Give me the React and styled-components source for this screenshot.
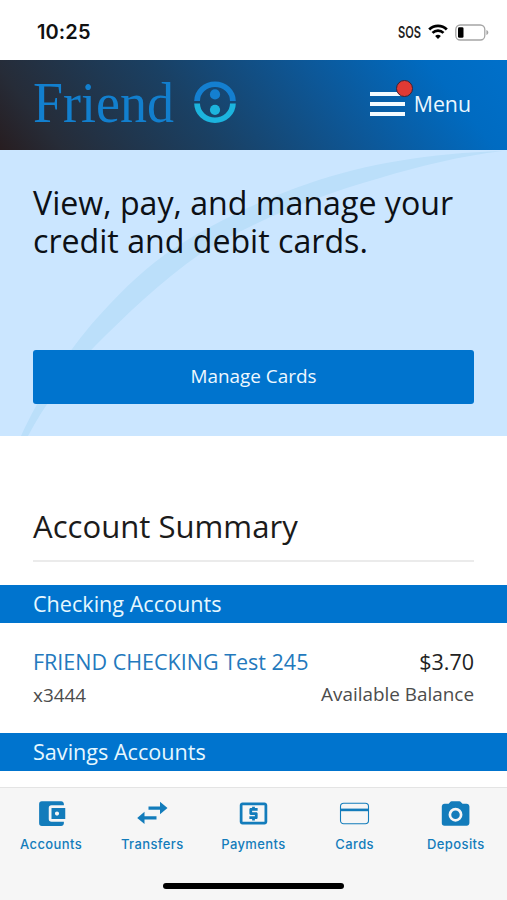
import React from "react";
import styled, { createGlobalStyle } from "styled-components";
import { MdAccountBalanceWallet, MdLocalAtm } from "react-icons/md";

const GlobalStyle = createGlobalStyle`
  * {
    box-sizing: border-box;
  }
  body {
    margin: 0;
    background: #fff;
    font-family: "Open Sans", sans-serif;
  }
  h1, h2, h3, p {
    margin: 0;
    font-weight: 400;
  }
  button {
    border: 0;
    padding: 0;
    background: none;
    font-family: inherit;
  }
  svg {
    display: block;
  }
`;

const Screen = styled.div`
  display: flex;
  flex-direction: column;
  width: 507px;
  height: 900px;
  overflow: hidden;
  background: #fff;
`;

const StatusBar = styled.div`
  display: flex;
  flex: none;
  align-items: center;
  justify-content: space-between;
  height: 60px;
  padding: 4px 18px 0 37px;
`;

const Clock = styled.span`
  font-family: Inter, sans-serif;
  font-size: 20px;
  font-weight: 600;
  letter-spacing: 0.1px;
  color: #111;
`;

const StatusIcons = styled.div`
  display: flex;
  align-items: center;
`;

const Sos = styled.svg`
  margin-right: 6px;
  overflow: visible;
  font-family: Inter, sans-serif;
  font-size: 15.5px;
  font-weight: 600;
`;

const Battery = styled.svg`
  margin-left: 7px;
`;

const Header = styled.header`
  display: flex;
  flex: none;
  align-items: center;
  justify-content: space-between;
  height: 90px;
  padding: 0 36px 0 33px;
  background: linear-gradient(52deg, #271d20 0%, #262c38 11%, #1a4063 38%, #0d5797 64%, #006bc1 86%, #0070ca 100%);
`;

const Brand = styled.svg`
  overflow: visible;
  font-family: "Liberation Serif", serif;
  font-size: 58px;
`;

const MenuButton = styled.button`
  display: flex;
  align-items: center;
  gap: 9px;
  padding-bottom: 3px;
  font-size: 21.3px;
  line-height: 30px;
  color: #eaf7ff;
`;

const Bars = styled.span`
  position: relative;
  display: flex;
  flex-direction: column;
  gap: 6px;
  width: 35px;
`;

const Bar = styled.span`
  height: 4px;
  background: #f4fbff;
`;

const Badge = styled.span`
  position: absolute;
  top: -12px;
  right: -8px;
  width: 17px;
  height: 17px;
  border: 1px solid #3c2436;
  border-radius: 50%;
  background: #e03a34;
`;

const Hero = styled.section`
  position: relative;
  flex: none;
  height: 286px;
  padding: 34px 33px 0;
  background: #cbe6ff;
`;

const Swoosh = styled.svg`
  position: absolute;
  top: 0;
  left: 0;
`;

const HeroTitle = styled.h1`
  position: relative;
  height: 166px;
  font-size: 32.15px;
  line-height: 37.5px;
  color: #0c1016;
  white-space: nowrap;
`;

const ManageButton = styled.button`
  position: relative;
  width: 100%;
  height: 54px;
  padding-bottom: 2px;
  border-radius: 3px;
  background: #0074ce;
  font-size: 18.9px;
  color: #eef8ff;
`;

const Summary = styled.main`
  flex: 1;
  min-height: 0;
  overflow: hidden;
  padding-top: 67px;
`;

const SummaryTitle = styled.h2`
  height: 59px;
  margin: 0 33px 23px;
  border-bottom: 2px solid #ebebeb;
  font-size: 31.1px;
  line-height: 46px;
  color: #1b1b1b;
`;

const GroupTitle = styled.h3`
  height: 38px;
  padding-left: 33px;
  background: #0074ce;
  font-size: 21.6px;
  line-height: 38px;
  color: #e6f8ff;
`;

const AccountRow = styled.div`
  display: flex;
  justify-content: space-between;
  height: 110px;
  padding: 23px 33px 0;
`;

const Column = styled.div`
  text-align: ${(props) => props.$align || "left"};
`;

const AccountName = styled.p`
  font-size: 21.5px;
  line-height: 32px;
  color: #2379bd;
`;

const Amount = styled.p`
  font-size: 21.5px;
  line-height: 32px;
  color: #222;
`;

const Detail = styled.p`
  padding-top: ${(props) => props.$top || 0}px;
  font-size: 18.9px;
  line-height: 32px;
  color: #4c4c4c;
`;

const TabBar = styled.nav`
  display: flex;
  flex: none;
  flex-direction: column;
  align-items: center;
  height: 113px;
  border-top: 1px solid #e4e4e4;
  background: #f6f6f6;
`;

const Tabs = styled.div`
  display: grid;
  grid-template-columns: repeat(5, 101.2px);
  width: 506px;
  height: 95px;
`;

const Tab = styled.button`
  display: flex;
  flex-direction: column;
  align-items: center;
  padding-top: 9px;
  color: #137cbb;
`;

const TabLabel = styled.span`
  margin-top: 5px;
  font-family: Inter, sans-serif;
  font-size: 13px;
  font-weight: 500;
  line-height: 18px;
  letter-spacing: 0.4px;
`;

const HomeIndicator = styled.div`
  width: 181px;
  height: 6px;
  border-radius: 3px;
  background: #000;
`;

const WifiIcon = () => (
  <svg width="20" height="16" viewBox="0 0 20 16" fill="none" stroke="#000">
    <path d="M1.2 5.4a12.6 12.6 0 0 1 17.6 0" strokeWidth="2.8" />
    <path d="M4.5 8.9a7.9 7.9 0 0 1 11 0" strokeWidth="2.7" />
    <path d="M10 15l-2.9-2.9a4.1 4.1 0 0 1 5.8 0z" fill="#000" stroke="none" />
  </svg>
);

const BatteryIcon = () => (
  <Battery width="34" height="17" viewBox="0 0 34 17">
    <rect x="0.8" y="1" width="29" height="15" rx="4.5" fill="none" stroke="#a5a5a5" strokeWidth="1.3" />
    <rect x="3" y="3.3" width="5.5" height="10.4" rx="1.3" fill="#000" />
    <path d="M31.4 6v5c1.3-.4 1.9-1.3 1.9-2.5S32.7 6.4 31.4 6z" fill="#a5a5a5" />
  </Battery>
);

const Logo = () => (
  <Brand width="206" height="60" viewBox="0 0 206 60">
    <text x="0" y="47" textLength="141" lengthAdjust="spacingAndGlyphs" fill="#127fce">
      Friend
    </text>
    <path d="M161.2 26a20.8 19.6 0 0 1 41.6 0h-5.8a15 14 0 0 0-30 0z" fill="#147fd0" />
    <path d="M161.2 28.6a20.8 19.4 0 0 0 41.6 0H197a15 14 0 0 1-30 0z" fill="#1cb4de" />
    <circle cx="182" cy="19.4" r="5.1" fill="#147fd0" />
    <circle cx="182" cy="34.8" r="5.1" fill="#1cb4de" />
  </Brand>
);

const TransferIcon = () => (
  <svg width="33" height="33" viewBox="0 0 33 33" fill="currentColor">
    <path d="M12.5 9.5H24V4.8l7.5 6.3-7.5 6.2v-4.6H12.5z" />
    <path d="M20.5 19.3h-12v-4.6l-7.3 6.2 7.3 6.2v-4.6h12z" />
  </svg>
);

const CardIcon = () => (
  <svg width="33" height="33" viewBox="0 0 33 33" fill="none" stroke="currentColor">
    <rect x="2.5" y="6.2" width="28" height="20.5" rx="3.2" strokeWidth="1.1" />
    <path d="M2.5 12.9h28" strokeWidth="2.6" />
  </svg>
);

const CameraIcon = () => (
  <svg width="33" height="33" viewBox="0 0 33 33">
    <path
      d="M12.6 4.300h7.800c.5 0 .9.200 1.200.5l1.900 1.900h4.200c1.500 0 2.700 1.200 2.700 2.700v16.700c0 1.500-1.200 2.700-2.700 2.700H5.500a2.700 2.700 0 0 1-2.700-2.700V9.400c0-1.500 1.200-2.700 2.700-2.700h4.200l1.700-1.900c.3-.3.7-.5 1.200-.5z"
      fill="currentColor"
    />
    <circle cx="16.5" cy="17.7" r="5.6" fill="none" stroke="#f6f6f6" strokeWidth="2.7" />
  </svg>
);

const tabs = [
  { label: "Accounts", icon: <MdAccountBalanceWallet size={33} /> },
  { label: "Transfers", icon: <TransferIcon /> },
  { label: "Payments", icon: <MdLocalAtm size={33} /> },
  { label: "Cards", icon: <CardIcon /> },
  { label: "Deposits", icon: <CameraIcon /> },
];

const App = () => {
  return (
    <Screen>
      <GlobalStyle />
      <StatusBar>
        <Clock>10:25</Clock>
        <StatusIcons>
          <Sos width="24" height="20" viewBox="0 0 24 20">
            <text x="0" y="15.5" textLength="23" lengthAdjust="spacingAndGlyphs" fill="#222">
              SOS
            </text>
          </Sos>
          <WifiIcon />
          <BatteryIcon />
        </StatusIcons>
      </StatusBar>
      <Header>
        <Logo />
        <MenuButton>
          <Bars>
            <Bar />
            <Bar />
            <Bar />
            <Badge />
          </Bars>
          Menu
        </MenuButton>
      </Header>
      <Hero>
        <Swoosh width="507" height="286" viewBox="0 0 507 286">
          <path
            d="M503 1C430 3 365 14 310 33C258 51 210 74 167 103C137 125 117 146 98 167C68 200 40 245 21 286H28C45 254 65 227 95 196C125 166 160 132 200 104C250 73 315 46 380 28C420 16 460 6 503 1z"
            fill="#bbdffa"
          />
        </Swoosh>
        <HeroTitle>
          View, pay, and manage your
          <br />
          credit and debit cards.
        </HeroTitle>
        <ManageButton>Manage Cards</ManageButton>
      </Hero>
      <Summary>
        <SummaryTitle>Account Summary</SummaryTitle>
        <GroupTitle>Checking Accounts</GroupTitle>
        <AccountRow>
          <Column>
            <AccountName>FRIEND CHECKING Test 245</AccountName>
            <Detail $top={1}>x3444</Detail>
          </Column>
          <Column $align="right">
            <Amount>$3.70</Amount>
            <Detail>Available Balance</Detail>
          </Column>
        </AccountRow>
        <GroupTitle>Savings Accounts</GroupTitle>
      </Summary>
      <TabBar>
        <Tabs>
          {tabs.map((tab) => (
            <Tab key={tab.label}>
              {tab.icon}
              <TabLabel>{tab.label}</TabLabel>
            </Tab>
          ))}
        </Tabs>
        <HomeIndicator />
      </TabBar>
    </Screen>
  );
};

export default App;
